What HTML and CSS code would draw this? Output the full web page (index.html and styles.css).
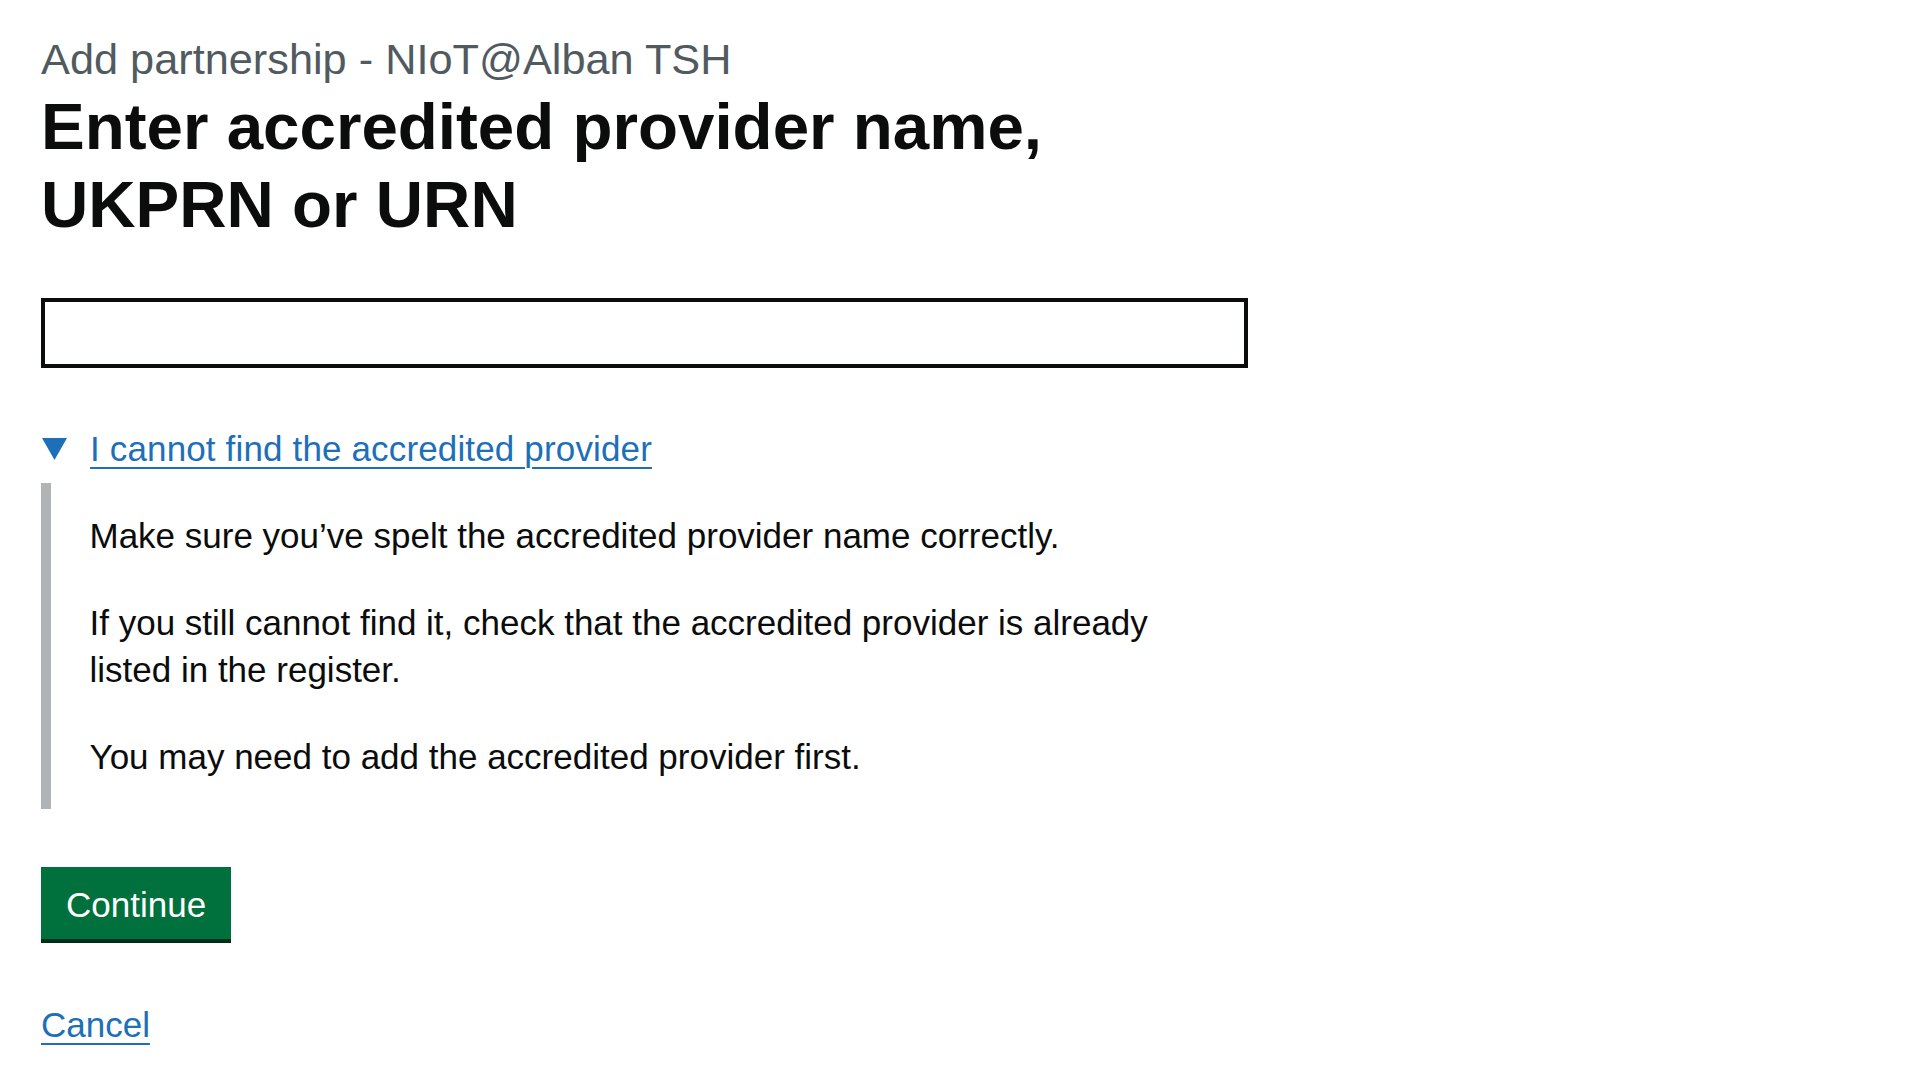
FILE: index.html
```html
<!DOCTYPE html>
<html lang="en">
<head>
<meta charset="utf-8">
<title>Enter accredited provider name, UKPRN or URN</title>
<link rel="stylesheet" href="styles.css">
</head>
<body>
<main class="page">
  <div class="column">
    <span class="caption">Add partnership - NIoT@Alban TSH</span>
    <h1 class="heading">Enter accredited provider name, UKPRN or URN</h1>
    <input class="input" type="text" aria-label="Accredited provider name, UKPRN or URN">
    <details class="details" open>
      <summary class="summary">
        <svg class="summary-arrow" viewBox="0 0 25 22" width="25" height="22" aria-hidden="true"><polygon points="0,0 25,0 12.5,22" fill="#1d70b8"/></svg>
        <span class="summary-text">I cannot find the accredited provider</span>
      </summary>
      <div class="details-text">
        <p class="body">Make sure you’ve spelt the accredited provider name correctly.</p>
        <p class="body">If you still cannot find it, check that the accredited provider is already listed in the register.</p>
        <p class="body">You may need to add the accredited provider first.</p>
      </div>
    </details>
    <button class="button" type="submit">Continue</button>
    <p class="cancel"><a class="link" href="#">Cancel</a></p>
  </div>
</main>
</body>
</html>
```
FILE: styles.css
```css
* { box-sizing: border-box; }

html, body {
  margin: 0;
  padding: 0;
  background: #ffffff;
}

body {
  font-family: "Liberation Sans", Arial, sans-serif;
  color: #0b0c0c;
}

.page {
  padding: 31px 0 0 41px;
}

.column {
  width: 1207px;
  display: flex;
  flex-direction: column;
  align-items: flex-start;
}

.caption {
  display: block;
  font-size: 43.3px;
  line-height: 56.5px;
  color: #505a5f;
}

.heading {
  margin: 0;
  font-size: 65.5px;
  line-height: 78px;
  font-weight: 700;
  color: #0b0c0c;
}

.input {
  margin-top: 54.5px;
  width: 1207px;
  height: 70px;
  border: 4px solid #0b0c0c;
  border-radius: 0;
  padding: 0 10px;
  font-family: inherit;
  font-size: 35px;
  background: #fff;
  outline: none;
}

.details {
  margin-top: 56.5px;
  width: 100%;
}

.summary {
  display: block;
  list-style: none;
  position: relative;
  padding-left: 49px;
  cursor: pointer;
  font-size: 35px;
  line-height: 47px;
}

.summary::-webkit-details-marker { display: none; }
.summary::marker { content: ""; }

.summary-arrow {
  position: absolute;
  left: 1px;
  top: 13px;
  display: block;
}

.summary-text {
  color: #1d70b8;
  text-decoration: underline;
  text-decoration-thickness: 2px;
  text-underline-offset: 6px;
  letter-spacing: 0.15px;
}

.details-text {
  margin-top: 11.5px;
  border-left: 10px solid #b1b4b6;
  padding: 28.5px 40px 29.5px 38.5px;
}

.body {
  margin: 0 0 40px 0;
  font-size: 35px;
  line-height: 47px;
  color: #0b0c0c;
}

.body:last-child { margin-bottom: 0; }

.button {
  margin-top: 58px;
  height: 72px;
  padding: 14px 25px 11px;
  border: 0;
  border-radius: 0;
  background: #00703c;
  box-shadow: 0 4px 0 #002d18;
  color: #ffffff;
  font-family: inherit;
  font-size: 35px;
  line-height: 47px;
  cursor: pointer;
}

.cancel {
  margin: 62px 0 0 0;
  font-size: 35px;
  line-height: 47px;
}

.link {
  color: #1d70b8;
  text-decoration: underline;
  text-decoration-thickness: 2px;
  text-underline-offset: 6px;
}
```
